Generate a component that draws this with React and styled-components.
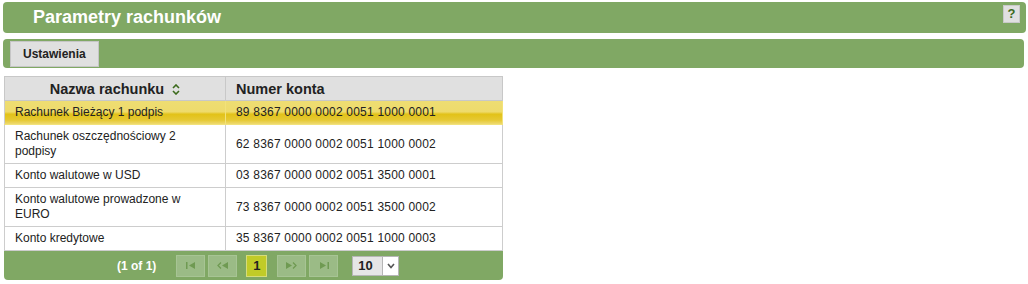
import React from 'react'
import styled, { createGlobalStyle } from 'styled-components'

const Global = createGlobalStyle`
body {
  margin: 0;
  background: #fff;
  font-family: "Liberation Sans", Arial, sans-serif;
}
`;

const Page = styled.div`
padding: 2px 2px 0 3px;
`;

const Header = styled.div`
height: 31px;
background: #80a864;
border-radius: 4px;
display: flex;
align-items: center;
justify-content: space-between;
padding: 0 6px 0 30px;
box-sizing: border-box;
`;

const Title = styled.h1`
margin: 0;
font-size: 18px;
font-weight: bold;
color: #fff;
`;

const HelpButton = styled.button`
align-self: flex-start;
margin-top: 3px;
width: 17px;
height: 18px;
padding: 0;
border: 1px solid #c9c9c9;
background: #e0e0e0;
color: #3c6a1c;
font: bold 13px "Liberation Sans", Arial, sans-serif;
line-height: 16px;
`;

const Toolbar = styled.div`
margin-top: 6px;
width: 1021px;
height: 29px;
background: #80a864;
border-radius: 4px;
display: flex;
align-items: center;
padding: 0 7px;
box-sizing: border-box;
`;

const ToolButton = styled.button`
height: 26px;
padding: 0 12px;
border: 1px solid #c6c6c6;
background: #e0e0e0;
color: #222;
font: bold 12px "Liberation Sans", Arial, sans-serif;
`;

const Grid = styled.div`
margin: 8px 0 0 1px;
width: 499px;
`;

const Table = styled.table`
width: 100%;
table-layout: fixed;
border-collapse: collapse;
font-size: 12px;
color: #222;
`;

const Th = styled.th`
background: #e0e0e0;
border: 1px solid #c8c8c8;
height: 23px;
padding: 0 10px;
font-size: 14.5px;
font-weight: bold;
color: #222;
text-align: ${p => p.$center ? 'center' : 'left'};
`;

const SortIcon = styled.svg`
margin-left: 8px;
vertical-align: -1px;
`;

const Tr = styled.tr`
background: ${p => p.$selected
  ? 'linear-gradient(#eedd72 0%, #eedb6c 45%, #e2c218 55%, #e6c934 80%, #f0de80 100%)'
  : '#fff'};
`;

const Td = styled.td`
border: 1px solid ${p => p.$selected ? '#f2e27a' : '#cdcdcd'};
border-left-color: #cdcdcd;
padding: 4px 10px;
line-height: 15px;
vertical-align: middle;
letter-spacing: ${p => p.$num ? '0.2px' : '0'};
`;

const Paginator = styled.div`
height: 29px;
background: #80a864;
border-radius: 0 0 4px 4px;
display: flex;
align-items: center;
padding-left: 113px;
box-sizing: border-box;
`;

const PageInfo = styled.span`
color: #fff;
font-weight: bold;
font-size: 12px;
margin-right: 20px;
`;

const NavButton = styled.span`
width: 29px;
height: 22px;
margin-right: ${p => p.$gap || 3}px;
background: #9bbb86;
border: 1px solid #a7c494;
box-sizing: border-box;
display: flex;
align-items: center;
justify-content: center;
`;

const PageNumber = styled.span`
width: 21px;
height: 22px;
margin-right: 10px;
background: #c1cb28;
border: 1px solid #d6dc7a;
box-sizing: border-box;
display: flex;
align-items: center;
justify-content: center;
font-weight: bold;
font-size: 13px;
color: #222;
`;

const Select = styled.div`
margin-left: 11px;
width: 47px;
height: 20px;
display: flex;
border: 1px solid #b6b6b6;
background: #e6e6e6;
box-sizing: border-box;
`;

const SelectValue = styled.span`
flex: 1;
font-weight: bold;
font-size: 13px;
color: #222;
line-height: 18px;
padding-left: 5px;
`;

const SelectArrow = styled.span`
width: 15px;
border-left: 1px solid #b6b6b6;
background: #fff;
display: flex;
align-items: center;
justify-content: center;
`;

const rows = [
  ['Rachunek Bieżący 1 podpis', '89 8367 0000 0002 0051 1000 0001'],
  ['Rachunek oszczędnościowy 2 podpisy', '62 8367 0000 0002 0051 1000 0002'],
  ['Konto walutowe w USD', '03 8367 0000 0002 0051 3500 0001'],
  ['Konto walutowe prowadzone w EURO', '73 8367 0000 0002 0051 3500 0002'],
  ['Konto kredytowe', '35 8367 0000 0002 0051 1000 0003'],
]

const navColor = '#6f9a52'

function First() {
  return (
    <svg width="10" height="7" viewBox="0 0 10 7">
      <rect x="0" y="0" width="1.5" height="7" fill={navColor} />
      <path d="M9 0 L3 3.5 L9 7 Z" fill={navColor} />
    </svg>
  )
}
function Prev() {
  return (
    <svg width="11" height="7" viewBox="0 0 11 7">
      <path d="M4 0.5 L1 3.5 L4 6.5" stroke={navColor} strokeWidth="1.3" fill="none" />
      <path d="M11 0 L5 3.5 L11 7 Z" fill={navColor} />
    </svg>
  )
}
function Next() {
  return (
    <svg width="11" height="7" viewBox="0 0 11 7">
      <path d="M0 0 L6 3.5 L0 7 Z" fill={navColor} />
      <path d="M7 0.5 L10 3.5 L7 6.5" stroke={navColor} strokeWidth="1.3" fill="none" />
    </svg>
  )
}
function Last() {
  return (
    <svg width="10" height="7" viewBox="0 0 10 7">
      <path d="M1 0 L7 3.5 L1 7 Z" fill={navColor} />
      <rect x="8.5" y="0" width="1.5" height="7" fill={navColor} />
    </svg>
  )
}

export default function App() {
  return (
    <Page>
      <Global />
      <Header>
        <Title>Parametry rachunków</Title>
        <HelpButton>?</HelpButton>
      </Header>
      <Toolbar>
        <ToolButton>Ustawienia</ToolButton>
      </Toolbar>
      <Grid>
        <Table>
          <colgroup>
            <col style={{ width: 221 }} />
            <col />
          </colgroup>
          <thead>
            <tr>
              <Th $center>
                Nazwa rachunku
                <SortIcon width="8" height="11" viewBox="0 0 8 11">
                  <path d="M1 4 L4 1 L7 4 M1 7 L4 10 L7 7" stroke="#3c6a1c" strokeWidth="1.6" fill="none" />
                </SortIcon>
              </Th>
              <Th>Numer konta</Th>
            </tr>
          </thead>
          <tbody>
            {rows.map(([name, num], i) => {
              const sel = i === 0
              return (
                <Tr key={i} $selected={sel}>
                  <Td $selected={sel}>{name}</Td>
                  <Td $selected={sel} $num>{num}</Td>
                </Tr>
              )
            })}
          </tbody>
        </Table>
        <Paginator>
          <PageInfo>(1 of 1)</PageInfo>
          <NavButton><First /></NavButton>
          <NavButton $gap={9}><Prev /></NavButton>
          <PageNumber>1</PageNumber>
          <NavButton><Next /></NavButton>
          <NavButton><Last /></NavButton>
          <Select>
            <SelectValue>10</SelectValue>
            <SelectArrow>
              <svg width="8" height="6" viewBox="0 0 8 6">
                <path d="M1 1 L4 4.5 L7 1" stroke="#555" strokeWidth="1.6" fill="none" />
              </svg>
            </SelectArrow>
          </Select>
        </Paginator>
      </Grid>
    </Page>
  )
}
